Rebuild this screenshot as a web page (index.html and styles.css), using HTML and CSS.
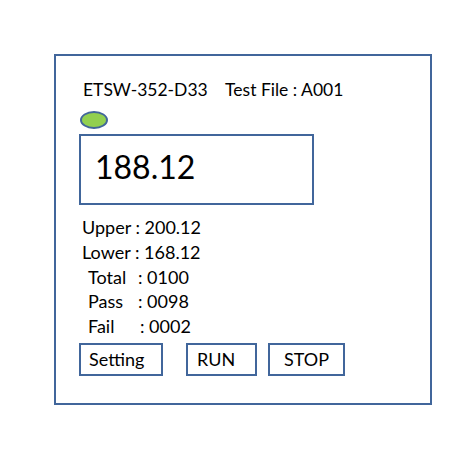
FILE: index.html
```html
<!DOCTYPE html>
<html lang="en">
<head>
  <meta charset="UTF-8" />
  <title>ETSW-352-D33</title>
  <link rel="stylesheet" href="styles.css">
</head>
<body>
  <div class="panel">
    <div class="header">ETSW-352-D33&nbsp;&nbsp;&nbsp; Test File : A001</div>
    <div class="lamp"></div>
    <div class="display">188.12</div>
    <div class="stats">
      <div class="row">Upper&nbsp;: 200.12</div>
      <div class="row">Lower&nbsp;: 168.12</div>
      <div class="row indent"><span class="key">Total</span>: 0100</div>
      <div class="row indent"><span class="key">Pass</span>: 0098</div>
      <div class="row indent"><span class="key key-fail">Fail</span>: 0002</div>
    </div>
    <div class="buttons">
      <div class="btn btn-setting">Setting</div>
      <div class="btn btn-run">RUN</div>
      <div class="btn btn-stop">STOP</div>
    </div>
  </div>
</body>
</html>
```

FILE: styles.css
```css
:root {
  --line: #41669b;
  --lamp: #92d050;
  --text: #000000;
}

* {
  box-sizing: border-box;
  margin: 0;
  padding: 0;
}

body {
  background: #ffffff;
  font-family: Lato, 'Open Sans', sans-serif;
  color: var(--text);
  width: 460px;
  height: 460px;
}

.panel {
  margin: 54px 0 0 54px;
  width: 378px;
  height: 351px;
  border: 2px solid var(--line);
  padding: 21px 0 0 23px;
  display: flex;
  flex-direction: column;
}

.header {
  font-size: 17.5px;
  line-height: 26px;
  padding-left: 4px;
}

.lamp {
  width: 28px;
  height: 18px;
  margin: 8px 0 0 1px;
  border: 2px solid var(--line);
  border-radius: 50%;
  background: var(--lamp);
}

/* main reading */
.display {
  margin-top: 5px;
  width: 235px;
  height: 71px;
  border: 2px solid var(--line);
  font-size: 32px;
  line-height: 61px;
  padding-left: 14px;
}

.stats {
  margin-top: 10px;
  padding-left: 3px;
  font-size: 18px;
}

.row {
  line-height: 24.75px;
}

.row.indent {
  padding-left: 6px;
}

.key {
  display: inline-block;
  width: 50px;
}

.key-fail {
  width: 52px;
}

.buttons {
  margin-top: 4px;
  display: flex;
}

.btn {
  height: 33px;
  border: 2px solid var(--line);
  font-size: 18px;
  line-height: 29px;
}

.btn-setting {
  width: 84px;
  padding-left: 8px;
}

.btn-run {
  width: 71px;
  margin-left: 23px;
  padding-left: 9px;
}

.btn-stop {
  width: 77px;
  margin-left: 11px;
  padding-left: 14px;
}
```
